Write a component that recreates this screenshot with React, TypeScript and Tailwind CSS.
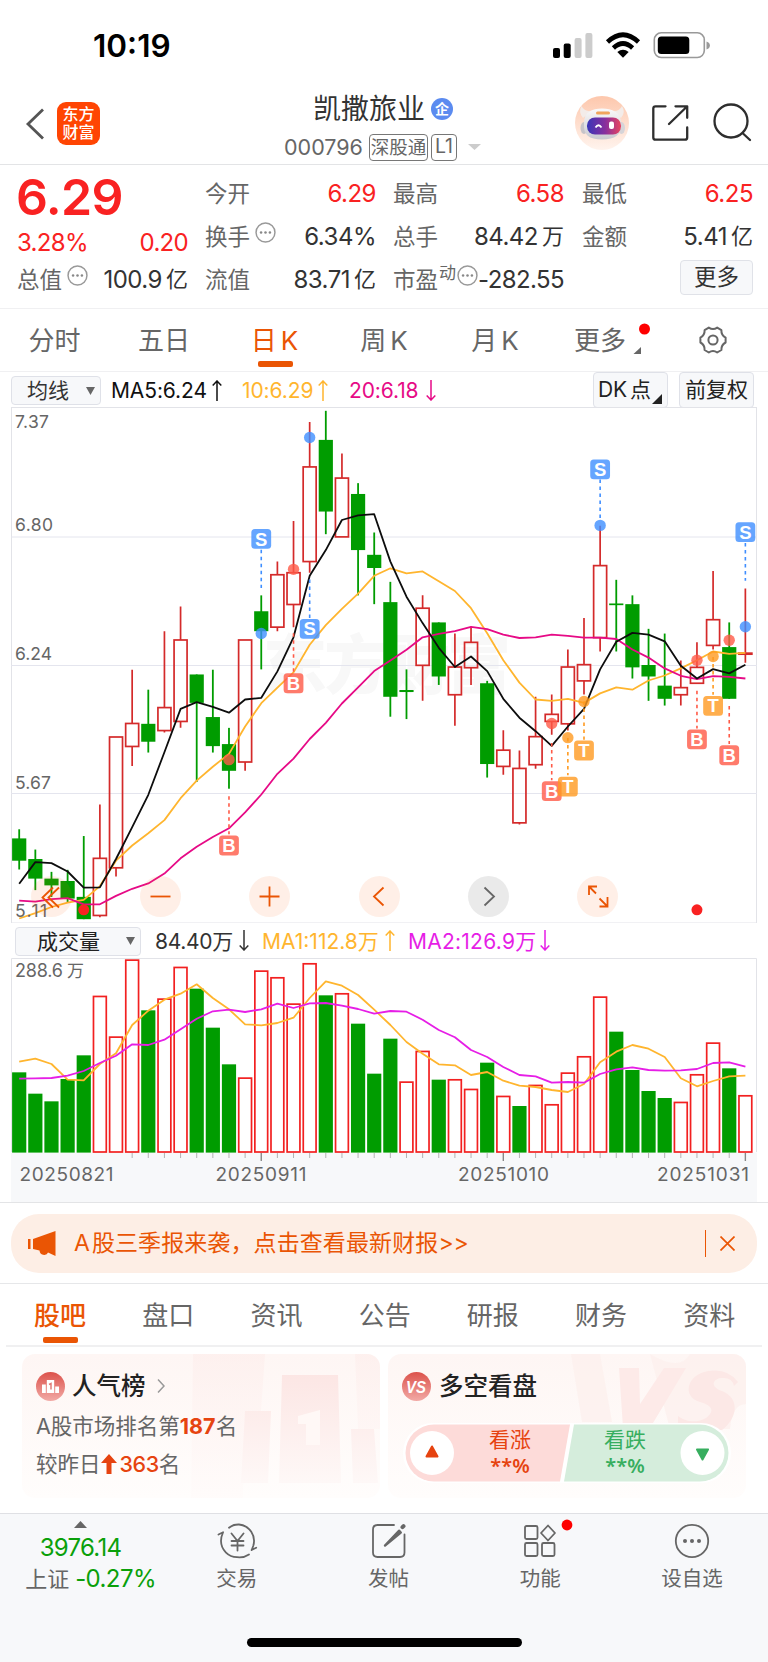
import React from "react";

type Candle = [kind: "R" | "G", high: number, top: number, bottom: number, low: number];

const candles: Candle[] = [
  ["G", 1270, 1297, 1363, 1389], ["G", 1330, 1358, 1416, 1450], ["G", 1396, 1416, 1436, 1470], ["G", 1390, 1423, 1475, 1487],
  ["G", 1290, 1470, 1536, 1536], ["R", 1197, 1356, 1525, 1530], ["R", 997, 997, 1384, 1410], ["R", 798, 957, 1025, 1083],
  ["G", 857, 958, 1011, 1043], ["R", 684, 910, 978, 984], ["R", 611, 710, 951, 970], ["G", 812, 812, 896, 1130],
  ["G", 798, 938, 1024, 1043], ["G", 970, 1018, 1097, 1150], ["R", 710, 710, 1071, 1097], ["G", 578, 625, 684, 797],
  ["R", 478, 517, 672, 684], ["R", 358, 511, 605, 672], ["R", 65, 198, 478, 511], ["G", 32, 118, 330, 397],
  ["R", 158, 231, 405, 405], ["G", 246, 278, 444, 578], ["G", 392, 458, 497, 604], ["G", 538, 598, 878, 937],
  ["G", 797, 858, 864, 944], ["R", 578, 616, 785, 890], ["G", 658, 658, 818, 843], ["R", 691, 790, 872, 964],
  ["R", 671, 717, 792, 843], ["G", 831, 838, 1077, 1117], ["R", 977, 1036, 1084, 1109], ["R", 1037, 1090, 1251, 1256],
  ["R", 878, 996, 1079, 1091], ["R", 871, 930, 951, 990], ["R", 738, 790, 958, 978], ["R", 645, 783, 831, 871],
  ["R", 372, 490, 703, 744], ["G", 532, 602, 607, 744], ["G", 578, 604, 791, 824], ["G", 677, 784, 818, 890],
  ["G", 691, 845, 884, 904], ["R", 771, 851, 872, 904], ["R", 717, 791, 838, 838], ["R", 506, 650, 726, 738],
  ["G", 658, 731, 884, 884], ["R", 558, 749, 752, 777],
];
const ma5 = [1431, 1367, 1370, 1395, 1443, 1442, 1358, 1264, 1168, 1042, 914, 894, 908, 925, 886, 881, 803, 702, 520, 444, 355, 341, 338, 478, 582, 660, 733, 790, 759, 802, 884, 940, 980, 1023, 966, 914, 797, 715, 689, 694, 714, 786, 824, 796, 809, 783];
const ma10 = [1534, 1518, 1500, 1487, 1479, 1438, 1363, 1318, 1282, 1243, 1178, 1126, 1085, 1047, 966, 897, 851, 806, 724, 666, 618, 573, 520, 498, 513, 507, 536, 565, 616, 690, 770, 836, 886, 890, 884, 896, 868, 850, 857, 830, 815, 794, 770, 744, 751, 748];
const ma20 = [1481, 1484, 1477, 1474, 1492, 1492, 1467, 1446, 1430, 1401, 1356, 1322, 1293, 1267, 1220, 1167, 1106, 1061, 1003, 955, 898, 850, 802, 771, 739, 702, 692, 684, 671, 678, 694, 704, 702, 694, 698, 703, 703, 707, 738, 762, 794, 816, 826, 817, 819, 824];
const volumes = [457, 521, 544, 477, 406, 227, 349, 118, 271, 235, 140, 206, 323, 433, 472, 151, 171, 250, 129, 226, 219, 311, 461, 356, 484, 392, 479, 477, 506, 428, 527, 558, 494, 552, 457, 408, 229, 335, 450, 513, 534, 545, 462, 367, 445, 525];
const volumeKinds = "GGGGGRRRGRRGGGRRRRRGRGGGRRGRRGRGRRRRRGGGGRRRGR";
const volMa1 = [425, 416, 432, 479, 481, 432, 400, 315, 272, 239, 221, 193, 234, 268, 313, 316, 309, 293, 234, 184, 197, 225, 269, 315, 366, 401, 433, 436, 465, 456, 482, 497, 501, 510, 516, 492, 427, 395, 375, 386, 411, 475, 499, 483, 469, 467];
const volMa2 = [476, 475, 474, 467, 453, 429, 407, 373, 375, 359, 328, 296, 274, 269, 276, 268, 251, 264, 250, 249, 257, 267, 281, 273, 275, 299, 330, 352, 390, 411, 441, 465, 469, 488, 486, 488, 462, 448, 442, 450, 452, 451, 447, 429, 427, 440];

type Marker = [kind: "B" | "S" | "T", index: number, box: number, dot: number, from: number, to: number];
const markers: Marker[] = [
  ["B", 13, 1318, 1064, 1172, 1285], ["S", 15, 411, 691, 443, 556], ["B", 17, 838, 501, 690, 805], ["S", 18, 677, 111, 531, 645],
  ["B", 33, 1157, 957, 1015, 1125], ["T", 34, 1144, 999, 1000, 1110], ["T", 35, 1037, 892, 892, 1005], ["S", 36, 205, 371, 235, 350],
  ["B", 42, 1004, 770, 860, 972], ["T", 43, 905, 759, 760, 872], ["B", 44, 1051, 711, 905, 1018], ["S", 45, 391, 671, 423, 535],
];
const markerColor = { B: "#ff5a47", S: "#3f8eff", T: "#ff9a20" };

const px = (i: number) => 19.2 + i * 16.137;
const py = (v: number) => 400 + v / 2.9585;
const vy = (v: number) => 920 + v / 3;
const path = (a: number[], f: (v: number) => number) => a.map((v, i) => `${px(i).toFixed(1)},${f(v).toFixed(1)}`).join(" ");

function PriceChart() {
  return (
    <svg className="block h-[516px] w-[746px]" viewBox="11 407 746 516">
      <rect x="11.5" y="407.5" width="745" height="515.5" fill="#fff" stroke="#e2e3e8" />
      <text x="263" y="688" fontSize="64" fontWeight="800" textLength="248" fill="#f8f8f8" fontFamily="Noto Sans CJK SC">东方财富</text>
      {[537, 665.5, 793.5].map((y) => <line key={y} x1="11" x2="757" y1={y} y2={y} stroke="#e4e5ee" />)}
      {candles.map(([k, h, t, b, l], i) => {
        const x = px(i);
        return k === "G" ? (
          <g key={i} fill="#009c00">
            <rect x={x - 0.9} y={py(h)} width="1.8" height={py(l) - py(h)} />
            <rect x={x - 7.1} y={py(t)} width="14.2" height={py(b) - py(t)} />
          </g>
        ) : (
          <g key={i} stroke="#d42a2a" strokeWidth="1.7" fill="none">
            <path d={`M${x} ${py(h)}V${py(t)}M${x} ${py(b)}V${py(l)}`} />
            <rect x={x - 6.5} y={py(t)} width="13" height={py(b) - py(t)} />
          </g>
        );
      })}
      <g fill="none" strokeWidth="1.8" strokeLinejoin="round">
        <polyline points={path(ma10, py)} stroke="#ffb52e" />
        <polyline points={path(ma20, py)} stroke="#e60a86" />
        <polyline points={path(ma5, py)} stroke="#0d0d0d" />
      </g>
      {markers.map(([k, i, box, dot, from, to]) => (
        <g key={i} fill={markerColor[k]}>
          <line x1={px(i)} x2={px(i)} y1={py(from)} y2={py(to)} stroke={markerColor[k]} strokeWidth="1.6" strokeDasharray="3.5 3.5" />
          <circle cx={px(i)} cy={py(dot)} r="5.7" opacity=".8" />
          <rect x={px(i) - 9.9} y={py(box) - 9.9} width="19.8" height="19.8" rx="3.5" opacity=".8" />
          <text x={px(i)} y={py(box) + 6.6} textAnchor="middle" fill="#fff" fontSize="18.5" fontWeight="700" fontFamily="Liberation Sans">{k}</text>
        </g>
      ))}
      <circle cx={px(4)} cy="909.8" r="5.5" fill="#f92222" />
      <circle cx={px(42)} cy="909.8" r="5.5" fill="#f92222" />
      <g fill="#666" fontSize="17.5" fontFamily="Inter">
        {([["7.37", 427.5, 34], ["6.80", 531, 38], ["6.24", 660, 37], ["5.67", 788.5, 36], ["5.11", 916.5, 32]] as const).map(([t, y, w]) => (
          <text key={t} x="15" y={y} textLength={w}>{t}</text>
        ))}
      </g>
    </svg>
  );
}

function VolumeChart() {
  return (
    <svg className="block h-[244px] w-[746px]" viewBox="11 958 746 244">
      <rect x="11" y="1152.5" width="746" height="50" fill="#f7f8fa" />
      <path d="M11.5 1152V958.5H756.5V1152" fill="none" stroke="#e2e3e8" />
      {volumes.map((v, i) => volumeKinds[i] === "G" ? (
        <rect key={i} x={px(i) - 7.1} y={vy(v)} width="14.2" height={1152.6 - vy(v)} fill="#009c00" />
      ) : (
        <rect key={i} x={px(i) - 6.4} y={vy(v) + 0.8} width="12.8" height={1151.2 - vy(v)} fill="none" stroke="#f22020" strokeWidth="1.7" />
      ))}
      <g fill="none" strokeWidth="1.8" strokeLinejoin="round">
        <polyline points={path(volMa1, vy)} stroke="#ffb52e" />
        <polyline points={path(volMa2, vy)} stroke="#e61ee6" />
      </g>
      {volumes.map((_, i) => i < 7 ? null : (
        <line key={i} x1={px(i)} x2={px(i)} y1="1153" y2={i % 15 === 0 ? 1161 : 1158} stroke={i % 15 === 0 ? "#888" : "#aaa"} strokeWidth={i % 15 === 0 ? 1.4 : 0.9} />
      ))}
      <g fill="#666" fontSize="19" fontFamily="Inter">
        <text x="15" y="976.5" fontSize="18" textLength="48">288.6</text>
        <text x="67" y="976.5" fontSize="17" fontFamily="Noto Sans CJK SC">万</text>
        <text x="19.5" y="1181" textLength="94">20250821</text>
        <text x="215.5" y="1181" textLength="91">20250911</text>
        <text x="458" y="1181" textLength="91">20251010</text>
        <text x="657" y="1181" textLength="92">20251031</text>
      </g>
    </svg>
  );
}

function StatusBar() {
  return (
    <div className="flex h-[88px] items-center pt-[4px] pl-[93px]">
      <div className="w-[460px] text-[31.5px] font-semibold text-black">10:19</div>
      <svg className="h-[30px] w-[160px]" viewBox="553 31 160 30">
        <rect x="553" y="48" width="7" height="10" rx="2" />
        <rect x="563.7" y="43.5" width="7" height="14.5" rx="2" />
        <rect x="574.6" y="38" width="7" height="20" rx="2" fill="#ccc" />
        <rect x="585.4" y="33" width="7" height="25" rx="2" fill="#ccc" />
        <g fill="none" stroke="#000" strokeWidth="4.6">
          <path d="M607.5 42 Q623 27.500 638.500 42" />
          <path d="M613.4 48 Q623 39 632.6 48" />
        </g>
        <path d="M617.3 52 Q623 47.500 628.700 52 L623 57.700Z" />
        <rect x="654.3" y="32.800" width="50" height="24.700" rx="7" fill="none" stroke="#999" strokeWidth="1.6" />
        <rect x="657.8" y="36.500" width="31.500" height="17.500" rx="3.500" />
        <path d="M706.500 41.500q3.400 1.200 3.400 4t-3.400 4z" fill="#999" />
      </svg>
    </div>
  );
}

function Header() {
  return (
    <header className="flex h-[77px] border-b border-[#e3e4e6]">
      <svg className="mt-[20px] ml-[24px] h-[32px] w-[22px] shrink-0" viewBox="0 0 22 32" fill="none" stroke="#555" strokeWidth="2.8"><path d="M19 1.500L4 16l15 14.500" /></svg>
      <div className="mt-[14px] ml-[11px] flex h-[43px] w-[43px] shrink-0 flex-col items-center justify-center rounded-[9px] bg-[#ff4503] text-[16px] leading-[17.500px] font-medium text-white">
        <span>东方</span><span>财富</span>
      </div>
      <div className="ml-[184px] flex w-[290px] shrink-0 flex-col">
        <div className="flex h-[42px] items-center pl-[29px]">
          <span className="text-[28px] leading-[40px] text-[#333]">凯撒旅业</span>
          <span className="ml-[6px] flex h-[22px] w-[22px] items-center justify-center rounded-full bg-[#5b8bf0] text-[14px] leading-none font-bold text-white">企</span>
        </div>
        <div className="flex h-[34px] items-center gap-[3px] text-[#666]">
          <span className="mr-[3px] w-[79px] text-[21.500px] whitespace-nowrap">000796</span>
          <span className="flex h-[27px] w-[59px] items-center justify-center rounded-[4px] border border-[#777] text-[18.500px] leading-none">深股通</span>
          <span className="flex h-[27px] w-[26px] items-center justify-center rounded-[4px] border border-[#777] text-[19.500px] leading-none">L1</span>
          <svg className="ml-[8px] h-[6px] w-[13px]" viewBox="0 0 13 6"><path d="M0 0h13L6.500 6z" fill="#ccc" /></svg>
        </div>
      </div>
      <svg className="h-[66px] w-[180px] shrink-0" viewBox="573 89 180 66">
        <defs>
          <linearGradient id="halo" x1="0" x2="0" y1="0" y2="1"><stop stopColor="#fdc7ac" /><stop offset="1" stopColor="#fff4ee" /></linearGradient>
          <linearGradient id="visor"><stop stopColor="#3a35b8" /><stop offset=".55" stopColor="#8a2f9c" /><stop offset="1" stopColor="#e8455f" /></linearGradient>
          <linearGradient id="helmet" x1="0" x2="0" y1="0" y2="1"><stop stopColor="#fafafa" /><stop offset="1" stopColor="#c9c9d0" /></linearGradient>
        </defs>
        <circle cx="601" cy="124" r="27" fill="url(#halo)" />
        <path d="M582 119q-5-6-1.500-12q3 6 10 5zM620 119q5-6 1-12q-3 6-9 5z" fill="#f3ece9" />
        <ellipse cx="583" cy="129" rx="3.500" ry="6" fill="#c7c4c9" />
        <ellipse cx="620.500" cy="129" rx="3.500" ry="6" fill="#d6d4d8" />
        <path d="M583 124c0-11 8-14.500 18-14.500s19 3.500 19 14.500c1 12-6 16.500-19 16.500s-19-4.500-18-16.500z" fill="url(#helmet)" />
        <rect x="595" y="112.500" width="14" height="3" rx="1.500" fill="#f0a45c" />
        <rect x="586" y="118.500" width="34" height="17" rx="8" fill="url(#visor)" />
        <path d="M594.500 128.500q3-4.500 6 0" stroke="#fff" strokeWidth="1.800" fill="none" />
        <rect x="608" y="122.500" width="5" height="7.500" rx="2" fill="#fff" />
        <g fill="none" stroke="#2e2e2e" strokeWidth="2.300" strokeLinecap="round" strokeLinejoin="round">
          <path d="M664.500 107.300h-10q-2.200 0-2.200 2.200v29q0 2.200 2.200 2.200h29.500q2.200 0 2.200-2.200V128.500M674.500 107.300h11.700v11.500M685.500 108L668 125" />
          <circle cx="730" cy="122" r="16.500" /><path d="M742 134.500l7 6.500" />
        </g>
      </svg>
    </header>
  );
}

function Dots() {
  return (
    <svg className="mb-[9px] ml-[5px] h-[21px] w-[21px] shrink-0" viewBox="0 0 20 20" fill="#888">
      <circle cx="10" cy="10" r="9" fill="none" stroke="#999" strokeWidth="1.400" />
      <circle cx="5.800" cy="10" r="1.200" /><circle cx="10" cy="10" r="1.200" /><circle cx="14.200" cy="10" r="1.200" />
    </svg>
  );
}

function Cell({ label, value, unit, dots, red, w }: { label: string; value: string; unit?: string; dots?: boolean; red?: boolean; w: string }) {
  return (
    <div className={"flex h-[43px] items-center " + w}>
      <span className="text-[22.500px] text-[#666]">{label}</span>
      {dots && <Dots />}
      <span className={"ml-auto text-[24px] tracking-[-0.500px] " + (red ? "text-[#f92222]" : "text-[#333]")}>{value}</span>
      {unit && <span className="ml-[4px] text-[22px] text-[#333]">{unit}</span>}
    </div>
  );
}

function Quote() {
  return (
    <section className="flex h-[144px] border-b border-[#f0f0f2] pt-[7px] pl-[17px]">
      <div className="w-[171px]">
        <div className="-ml-[1px] flex h-[48px] items-center pt-[2px] text-[50px] font-semibold tracking-[-0.700px] text-[#f92222]">6.29</div>
        <div className="flex h-[38px] items-center justify-between pt-[8px] text-[24px] tracking-[-0.700px] text-[#f92222]"><span>3.28%</span><span>0.20</span></div>
        <Cell w="w-[171px]" label="总值" dots value="100.9" unit="亿" />
      </div>
      <div className="ml-[17px] w-[171px]">
        <Cell w="w-[171px]" label="今开" value="6.29" red />
        <Cell w="w-[171px]" label="换手" dots value="6.34%" />
        <Cell w="w-[171px]" label="流值" value="83.71" unit="亿" />
      </div>
      <div className="ml-[17px] w-[171px]">
        <Cell w="w-[171px]" label="最高" value="6.58" red />
        <Cell w="w-[171px]" label="总手" value="84.42" unit="万" />
        <div className="flex h-[43px] items-center text-[22.500px] whitespace-nowrap text-[#666]">
          <span>市盈</span><span className="mb-[12px] ml-[1px] text-[17px]">动</span>
          <span className="-ml-[4px] flex"><Dots /></span>
          <span className="ml-auto text-[24px] tracking-[-0.600px] text-[#333]">-282.55</span>
        </div>
      </div>
      <div className="ml-[18px] w-[171px]">
        <Cell w="w-[171px]" label="最低" value="6.25" red />
        <Cell w="w-[171px]" label="金额" value="5.41" unit="亿" />
        <button className="mt-[2px] ml-auto flex h-[35px] w-[73px] items-center justify-center rounded-[4px] border border-[#e0e2e8] bg-[#f7f8fa] text-[22.500px] leading-none text-[#333]">更多</button>
      </div>
    </section>
  );
}

function PeriodTabs() {
  const tab = "flex justify-center";
  return (
    <nav className="flex h-[63px] items-center border-b border-[#f0f0f2] text-[26px] text-[#666]">
      <span className={tab + " w-[109px]"}>分时</span>
      <span className={tab + " w-[110px]"}>五日</span>
      <span className="flex h-full w-[112px] flex-col items-center pt-[12px] text-[#ea5504]">
        <span className="leading-[39px] tracking-[1px]">日<span className="ml-[3px]">K</span></span>
        <span className="mt-[1px] h-[6px] w-[35px] rounded-[2px] bg-[#ea5504]" />
      </span>
      <span className={tab + " w-[107px] tracking-[1px]"}>周<span className="ml-[3px]">K</span></span>
      <span className={tab + " w-[115px] tracking-[1px]"}>月<span className="ml-[3px]">K</span></span>
      <span className="flex w-[100px] items-center pl-[21px]">更多
        <svg className="mb-[4px] ml-[7px] h-[32px] w-[18px]" viewBox="0 0 18 32"><circle cx="11.500" cy="7" r="5.500" fill="#fe0000" /><path d="M8 25v7H.500z" fill="#666" /></svg>
      </span>
      <svg className="ml-[45px] h-[30px] w-[30px]" viewBox="0 0 30 30" fill="none" stroke="#666" strokeWidth="2">
        <path strokeLinejoin="round" d="M10.800 2.600q4.200 3 8.400 0l4.200 2.500q-.3 5.100 4.200 7.500v4.900q-4.500 2.400-4.200 7.500l-4.200 2.500q-4.200-3-8.400 0l-4.200-2.500q.3-5.100-4.200-7.500v-4.900q4.500-2.400 4.200-7.500z" />
        <circle cx="15" cy="15" r="4.600" />
      </svg>
    </nav>
  );
}

function Arrow({ down, color, cls }: { down?: boolean; color: string; cls: string }) {
  return (
    <svg className={"h-[21px] w-[10px] shrink-0 " + cls} viewBox="0 0 10 21" fill="none" stroke={color} strokeWidth="1.500">
      <path d={down ? "M5 0v20M.700 15.500L5 20l4.300-4.500" : "M5 21V1M.700 5.500L5 1l4.300 4.500"} />
    </svg>
  );
}

function Caret() {
  return <svg className="h-[8px] w-[9px]" viewBox="0 0 9 8"><path d="M0 0h9L4.500 8z" fill="#666" /></svg>;
}

function MaRow() {
  return (
    <div className="flex h-[35px] items-center pl-[11px] text-[21px] tracking-[-0.100px] whitespace-nowrap">
      <button className="mt-[2px] flex h-[29px] w-[90px] items-center rounded-[4px] border border-[#dfe1e8] bg-[#f7f8fa] pl-[15px] text-[21px] leading-none tracking-normal text-[#333]">均线<span className="ml-[17px]"><Caret /></span></button>
      <span className="mt-[2px] ml-[10px] w-[101px] text-[#111]">MA5:6.24</span><Arrow color="#111" cls="mt-[1px]" />
      <span className="mt-[2px] ml-[20px] w-[74px] text-[#ffb52e]">10:6.29</span><Arrow color="#ffb52e" cls="ml-[2px] mt-[1px]" />
      <span className="mt-[2px] ml-[21px] w-[73px] text-[#e60a86]">20:6.18</span><Arrow down color="#e60a86" cls="ml-[4px] mt-[1px]" />
      <button className="ml-auto flex h-[36px] w-[75px] items-center rounded-[4px] border border-[#dfe1e8] bg-[#f7f8fa] pl-[4px] leading-none text-[#222]">DK<span className="ml-[3px] text-[21px]">点</span><svg className="mt-[18px] ml-[1px] h-[10px] w-[10px]" viewBox="0 0 10 10"><path d="M10 0v10H0z" fill="#222" /></svg></button>
      <button className="mr-[14px] ml-[11px] flex h-[36px] w-[75px] items-center justify-center rounded-[4px] border border-[#dfe1e8] bg-[#f7f8fa] text-[21px] leading-none text-[#222]">前复权</button>
    </div>
  );
}

const controls = [
  "M22 11.500L11.500 21.500L22 31.500M28 11.500L17.500 21.500L28 31.500",
  "M10.500 20.500h20",
  "M10.500 20.500h20M20.500 10.500v20",
  "M24.500 11.500L15 20.500l9.500 9",
  "M16.500 11.500L26 20.500l-9.500 9",
  "M12 19v-8.500h8M12 10.500l7 7M22.500 22.500l8 8M30.500 21v9.500h-8",
];

function VolRow() {
  return (
    <div className="flex h-[35px] items-center pl-[15px] text-[21px] whitespace-nowrap">
      <button className="mt-[1px] flex h-[29px] w-[126px] items-center rounded-[4px] border border-[#dfe1e8] bg-[#f7f8fa] pl-[21px] text-[21px] leading-none text-[#222]">成交量<span className="ml-[26px]"><Caret /></span></button>
      <span className="mt-[3px] ml-[14px] w-[79px] tracking-[-0.300px] text-[#333]">84.40万</span><Arrow down color="#333" cls="ml-[5px]" />
      <span className="mt-[3px] ml-[13px] w-[117px] text-[#ffb52e]">MA1:112.8万</span><Arrow color="#ffb52e" cls="ml-[6px]" />
      <span className="mt-[3px] ml-[13px] w-[127px] tracking-[0.250px] text-[#e61ee6]">MA2:126.9万</span><Arrow down color="#e61ee6" cls="ml-[5px]" />
    </div>
  );
}

function Banner() {
  return (
    <div className="border-t border-[#e3e4e6] px-[11px] pt-[11px] pb-[10px]">
      <div className="flex h-[59px] items-center rounded-[28px] bg-[#fdeee5] pl-[17px] text-[23px] text-[#ea5504]">
        <svg className="h-[25px] w-[28px]" viewBox="0 0 28 25" fill="#ea5504"><path d="M0 8h2.500v10H0zM5 8L27.500 0v25L20 21.500q-1 3-5 2.300q-3-.6-3.500-4.300L5 18z" /></svg>
        <span className="ml-[18px]">A</span><span className="ml-[2px] tracking-[0.100px]">股三季报来袭，点击查看最新财报</span><span>&gt;&gt;</span>
        <span className="ml-auto h-[27px] w-[1.500px] bg-[#ea5504]" />
        <svg className="mr-[22px] ml-[14px] h-[15px] w-[15px]" viewBox="0 0 15 15" fill="none" stroke="#ea5504" strokeWidth="1.700"><path d="M.500 .500l14 14M14.500 .500l-14 14" /></svg>
      </div>
    </div>
  );
}

function InfoTabs() {
  return (
    <nav className="border-t border-[#e6e7e9] px-[6px]">
      <div className="flex h-[63px] border-b-2 border-[#f0f0f1] pt-[12px] text-[26px] leading-[39px] text-[#666]">
        {["股吧", "盘口", "资讯", "公告", "研报", "财务", "资料"].map((t, i) => (
          <span key={t} className={"flex w-[108.200px] shrink-0 flex-col items-center " + (i === 0 ? "font-medium text-[#ea5504]" : "")}>
            {t}{i === 0 && <span className="mt-[2px] h-[6px] w-[35px] shrink-0 rounded-[2px] bg-[#ea5504]" />}
          </span>
        ))}
      </div>
    </nav>
  );
}

function Cards() {
  return (
    <div className="flex h-[166px] gap-[8px] px-[22px] pt-[7px]">
      <div className="relative h-[144px] w-[358px] overflow-hidden rounded-[13px] bg-linear-to-b from-[#fef6f4] to-[#fffdfc] px-[14px]">
        <svg className="absolute top-0 left-0 h-[144px] w-[358px]" viewBox="0 0 358 144">
          <defs>
            <linearGradient id="podium" x1="0" x2="0" y1="0" y2="1"><stop stopColor="#fce6e4" /><stop offset="1" stopColor="#fef8f7" /></linearGradient>
            <linearGradient id="backdrop" x1="0" x2="0" y1="0" y2="1"><stop stopColor="#fdeeec" /><stop offset="1" stopColor="#fffbfa" /></linearGradient>
          </defs>
          <path d="M171 0h72l-4 57h-16l-2 87h-52zM333 0h25v75h-22z" fill="url(#backdrop)" opacity=".7" />
          <path d="M223 57h26l-3 72h-27zM260 21h56l3 108h-62zM329 75h23l4 54h-25z" fill="url(#podium)" />
          <path d="M276 62l22-6v35h-14V70h-8z" fill="#fff8f6" />
        </svg>
        <div className="relative flex h-[64px] items-center">
          <svg className="h-[29px] w-[29px]" viewBox="0 0 29 29">
            <defs><linearGradient id="badge" x1="0" x2="0" y1="0" y2="1"><stop stopColor="#dc524b" /><stop offset="1" stopColor="#f2aaa6" /></linearGradient></defs>
            <circle cx="14.500" cy="14.500" r="14.500" fill="url(#badge)" />
            <path d="M6 12.500h3.800V21H6zM10.800 8h7.400v13h-7.400zM19.200 14.500H23V21h-3.800z" fill="#fff" /><path d="M13 12.500l2-1v6" stroke="#e17c77" strokeWidth="1.500" fill="none" />
          </svg>
          <span className="ml-[7px] text-[24.500px] font-medium text-[#222]">人气榜</span>
          <svg className="ml-[11px] h-[14px] w-[8px]" viewBox="0 0 8 14" fill="none" stroke="#999" strokeWidth="1.500"><path d="M1 .500L7 7l-6 6.500" /></svg>
        </div>
        <div className="relative flex h-[17px] items-center text-[21.500px] whitespace-nowrap text-[#666]">A股市场排名第<b className="font-bold text-[#e64310]">187</b>名</div>
        <div className="relative mt-[20px] flex h-[18px] items-center text-[21.500px] text-[#666]">较昨日
          <svg className="mr-[3px] h-[20px] w-[16px]" viewBox="0 0 16 20" fill="#e64310"><path d="M8 0l8 9h-5.500v11h-5V9H0z" /></svg>
          <span className="font-medium tracking-[-0.400px] text-[#e64310]">363</span>名
        </div>
      </div>
      <div className="relative h-[144px] w-[358px] overflow-hidden rounded-[13px] bg-linear-to-b from-[#fef6f4] to-[#fffdfc] px-[14px]">
        <svg className="absolute top-0 left-0 h-[144px] w-[358px]" viewBox="0 0 358 144">
          <path d="M183 0h29l12 68h-30zM262 0q30 18 40 0h56v50q-14 0-16 25l-60 0z" fill="#fdf0ee" opacity=".8" />
          <path d="M231 14h20l1 36 24-36h22l-36 60h-27z" fill="#fdeae8" />
          <path d="M350 28q-10-14-30-11c-22 4-26 26-8 31 14 4 14 10 6 16-10 6-22 3-28-2v14h44c16-12 18-32 0-39-14-5-8-14 2-13q8 0 10 8z" fill="#fce8e6" />
        </svg>
        <div className="relative flex h-[64px] items-center">
          <svg className="h-[29px] w-[29px]" viewBox="0 0 29 29"><circle cx="14.500" cy="14.500" r="14.500" fill="url(#badge)" /><text x="14" y="20.500" textAnchor="middle" fontFamily="Liberation Sans" fontSize="17" fontWeight="700" fontStyle="italic" textLength="20" lengthAdjust="spacingAndGlyphs" fill="#fff">VS</text></svg>
          <span className="ml-[8px] text-[24.500px] font-medium text-[#222]">多空看盘</span>
        </div>
        <div className="relative mt-[5px] ml-[1px] grid h-[60px] w-[328px] place-items-stretch">
          <svg className="col-start-1 row-start-1 h-[60px] w-[328px]" viewBox="0 0 328 60">
            <rect width="328" height="60" rx="30" fill="#fff" />
            <path d="M31 1.500H167L157 58.500H31A28.500 28.500 0 0 1 31 1.500z" fill="#fddbd9" />
            <path d="M171 1.500H297A28.500 28.500 0 0 1 297 58.500H161z" fill="#d5eddc" />
            <circle cx="29" cy="30" r="22" fill="#fff" /><circle cx="299.500" cy="30" r="22" fill="#fff" />
            <path d="M29 23.500l5.500 10h-11z" fill="#e64310" stroke="#e64310" strokeWidth="2" strokeLinejoin="round" />
            <path d="M299.500 36.500l5.500-10h-11z" fill="#37ae5f" stroke="#37ae5f" strokeWidth="2" strokeLinejoin="round" />
          </svg>
          <div className="z-10 col-start-1 row-start-1 flex pl-[76px] text-center text-[21px] leading-[25px]">
            <div className="w-[62px] pt-[4px] text-[#e64310]"><div>看涨</div><div className="mt-[1px] font-['Noto_Sans'] text-[20px] font-semibold">**%</div></div>
            <div className="ml-[53px] w-[62px] pt-[4px] text-[#37ae5f]"><div>看跌</div><div className="mt-[1px] font-['Noto_Sans'] text-[20px] font-semibold">**%</div></div>
          </div>
        </div>
      </div>
    </div>
  );
}

function NavItem({ label, children }: { label: string; children: React.ReactNode }) {
  return (
    <div className="flex w-[151.700px] shrink-0 flex-col items-center pt-[8px]">
      <svg className="h-[38px] w-[60px] overflow-visible" viewBox="0 0 60 38" fill="none" stroke="#666" strokeWidth="1.800" strokeLinecap="round" strokeLinejoin="round">{children}</svg>
      <span className="mt-[4px] text-[20.500px] leading-[30px] text-[#666]">{label}</span>
    </div>
  );
}

function BottomBar() {
  return (
    <footer className="h-[149px] border-t border-[#dfe0e4] bg-[#f7f8fa]">
      <div className="flex h-[110px]">
        <div className="flex w-[161px] shrink-0 flex-col items-center pt-[7px]">
          <svg className="h-[7px] w-[13px]" viewBox="0 0 13 7"><path d="M0 7h13L6.500 0z" fill="#666" /></svg>
          <span className="mt-[4px] text-[24px] leading-[32px] tracking-[-0.700px] text-[#0aa00a]">3976.14</span>
          <span className="ml-[20px] flex items-center leading-[30px] whitespace-nowrap"><span className="text-[22px] text-[#666]">上证</span><span className="ml-[6px] text-[24px] tracking-[-0.600px] text-[#0aa00a]">-0.27%</span></span>
        </div>
        <NavItem label="交易">
          <path d="M22 5.700Q26 2.300 32 2.500A16.500 16.500 0 0 1 46.200 24l-1.500 4M42 32.500Q37 36 30 35.200A16.500 16.500 0 0 1 14 19q0-4 1.800-8M11.500 12.500l4.600-2.300M44.600 28l4.600-2.300M24.500 11.500l6 7.500 6-7.500M24.500 19h12M24.500 23.500h12M30.500 19v9.500" />
        </NavItem>
        <NavItem label="发帖">
          <path d="M35 3H18.500q-4.500 0-4.500 4.500v23q0 4.500 4.500 4.500h22.500q4.500 0 4.500-4.500V12.500" />
          <path d="M26 23.500L40 8.700l1.800 1.800z" fill="#666" strokeWidth="2.400" /><path d="M43.500 5.200l1-1" strokeWidth="4" />
        </NavItem>
        <NavItem label="功能">
          <rect x="15" y="4" width="12.500" height="13" rx="1.500" /><rect x="15" y="21" width="12.500" height="13" rx="1.500" /><rect x="32" y="21" width="12.500" height="13" rx="1.500" />
          <path d="M38 3.500l7 7.500-7 7.500-7-7.500z" /><circle cx="57" cy="3" r="5.400" fill="#fe0000" stroke="none" />
        </NavItem>
        <NavItem label="设自选">
          <circle cx="30" cy="19" r="16.200" />
          <g fill="#666" stroke="none"><circle cx="23" cy="19" r="2" /><circle cx="30" cy="19" r="2" /><circle cx="37" cy="19" r="2" /></g>
        </NavItem>
      </div>
      <div className="mx-auto mt-[14px] h-[9px] w-[275px] rounded-full bg-black" />
    </footer>
  );
}

export default function App() {
  return (
    <div className="h-[1662px] w-[768px] overflow-hidden bg-white font-[Inter,'Noto_Sans_CJK_SC',sans-serif]">
      <StatusBar />
      <Header />
      <Quote />
      <PeriodTabs />
      <MaRow />
      <div className="relative h-[516px] pl-[11px]">
        <PriceChart />
        <div className="absolute top-[469px] left-[30.500px] flex gap-[68.400px]">
          {controls.map((d, i) => (
            <button key={i} className={"h-[41px] w-[41px] rounded-full " + (i === 4 ? "bg-[#e8e8e8]/90" : "bg-[#ff6410]/10")}>
              <svg className="h-[41px] w-[41px]" viewBox="0 0 41 41" fill="none" stroke={i === 4 ? "#666" : "#ea5504"} strokeWidth="1.800"><path d={d} /></svg>
            </button>
          ))}
        </div>
      </div>
      <VolRow />
      <div className="h-[244px] pl-[11px]"><VolumeChart /></div>
      <Banner />
      <InfoTabs />
      <Cards />
      <BottomBar />
    </div>
  );
}
